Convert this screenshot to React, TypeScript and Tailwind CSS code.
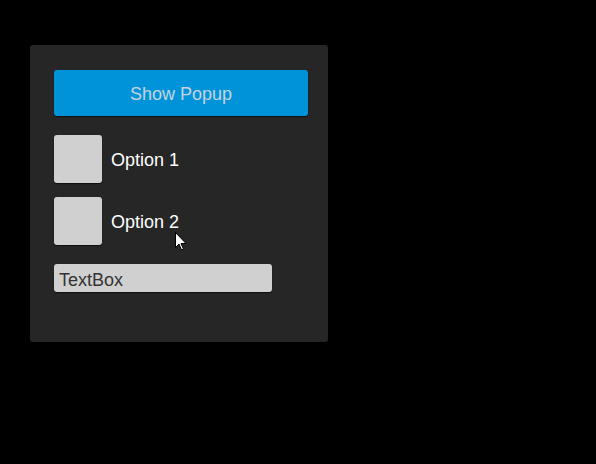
import React from 'react'

function Cursor() {
  return (
    <svg width="12" height="19" viewBox="0 0 12 19" className="absolute left-[175px] top-[232px]">
      <path d="M0.5 0.5v15l3.5-3.5 2.5 6 2-1-2.5-5.5h5z" fill="#fff" stroke="#000" strokeWidth="1" />
    </svg>
  )
}

function Option({ label }: { label: string }) {
  return (
    <label className="flex items-center gap-[9px]">
      <span className="w-12 h-12 rounded-[3px] bg-[#d0d0d0] shadow-[0_1px_1px_rgba(0,0,0,0.6)]" />
      <span className="text-[18px] text-white pt-[2px]">{label}</span>
    </label>
  )
}

export default function App() {
  return (
    <div className="relative w-[596px] h-[464px] bg-black font-['Liberation_Sans',Arial,sans-serif]">
      <div className="absolute left-[30px] top-[45px] w-[298px] h-[297px] rounded-[3px] bg-[#262626] pl-6 pt-[25px] flex flex-col">
        <button className="w-[254px] h-[46px] rounded-[3px] bg-[#0093d9] text-[#c6d3de] text-[18px] pt-[2px] shadow-[0_1px_1px_rgba(0,0,0,0.6)]">
          Show Popup
        </button>
        <div className="mt-[19px] flex flex-col gap-[14px]">
          <Option label="Option 1" />
          <Option label="Option 2" />
        </div>
        <div className="mt-[19px] w-[218px] h-[28px] rounded-[3px] bg-[#d0d0d0] text-[#333] text-[18px] leading-[28px] pt-[2px] pl-[5px] shadow-[0_1px_1px_rgba(0,0,0,0.6)]">
          TextBox
        </div>
      </div>
      <Cursor />
    </div>
  )
}
